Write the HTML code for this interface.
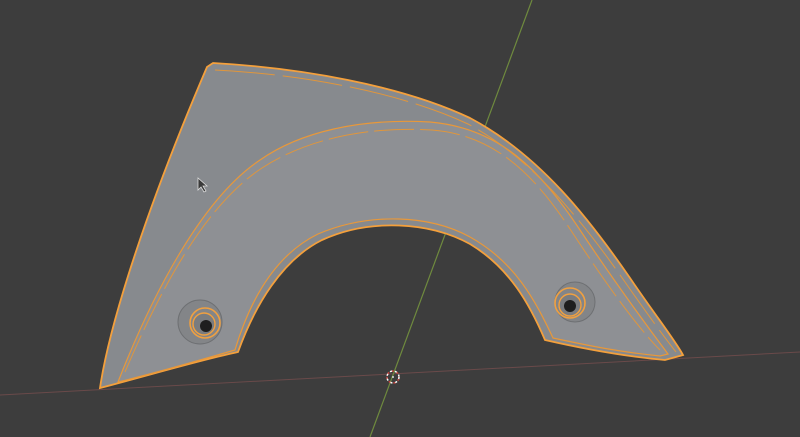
<!DOCTYPE html>
<html><head><meta charset="utf-8"><style>html,body{margin:0;padding:0;background:#3d3d3d;overflow:hidden}svg{display:block}</style></head>
<body>
<svg width="800" height="437" viewBox="0 0 800 437" xmlns="http://www.w3.org/2000/svg">
<rect width="800" height="437" fill="#3d3d3d"/>
<line x1="0" y1="395" x2="800" y2="352" stroke="#6a4a4a" stroke-width="1"/>
<line x1="532" y1="0" x2="370" y2="437" stroke="#6f8a3e" stroke-width="1.2"/>
<path d="M213,63 C300,68 400,85 470,118 C540,155 590,220 630,278 C655,315 675,340 683,355 L665,360 C620,356 580,348 545,340 C530,305 510,268 470,244 C430,222 370,218 322,240 C282,260 255,305 238,352 C200,360 150,375 100,388 C110,320 150,200 207,67 Z" fill="#878a8e" stroke="#f4a03c" stroke-width="1.8"/>
<path d="M118,382 C150,300 200,200 260,160 C300,132 360,118 430,122 C500,128 540,170 580,230 C620,290 650,330 668,354 L660,356 C620,352 590,346 553,338 C535,300 515,262 470,237 C430,215 370,212 318,234 C275,255 250,300 235,350 C200,360 160,372 118,382 Z" fill="#8e9094" stroke="#e8983a" stroke-width="1.2"/>
<path d="M125,372 C160,290 205,205 262,168 C305,140 365,126 432,130 C495,135 535,175 572,232 C610,290 640,330 660,350" fill="none" stroke="#e0963c" stroke-width="1" stroke-dasharray="40 6"/>
<path d="M215,70 C300,74 400,92 468,124 C535,160 585,225 625,282 C650,318 668,342 676,352" fill="none" stroke="#e0963c" stroke-width="1" stroke-dasharray="60 8"/>
<circle cx="200" cy="322" r="22" fill="#838588" stroke="#6e7073" stroke-width="1"/>
<circle cx="205" cy="323" r="15" fill="none" stroke="#f0a040" stroke-width="1.6"/>
<circle cx="204" cy="324" r="11" fill="#7a7c7f" stroke="#f0a040" stroke-width="1.4"/>
<circle cx="206" cy="326" r="6" fill="#1e1e1e"/>
<circle cx="575" cy="302" r="20" fill="#838588" stroke="#6e7073" stroke-width="1"/>
<circle cx="570" cy="303" r="15" fill="none" stroke="#f0a040" stroke-width="1.6"/>
<circle cx="570" cy="305" r="11" fill="#7a7c7f" stroke="#f0a040" stroke-width="1.4"/>
<circle cx="570" cy="306" r="6" fill="#1e1e1e"/>
<path d="M198,178 L198,190 L201,187 L204,192 L206,191 L203,186 L207,186 Z" fill="#3a3a3a" stroke="#ddd" stroke-width="0.8"/>
<circle cx="393" cy="377" r="6" fill="none" stroke="#fff" stroke-width="1.5" stroke-dasharray="3 2"/>
<circle cx="393" cy="377" r="6" fill="none" stroke="#c0403a" stroke-width="1.5" stroke-dasharray="2 3" stroke-dashoffset="3"/>
<circle cx="393" cy="377" r="1" fill="#ddd"/>
</svg>
</body></html>
